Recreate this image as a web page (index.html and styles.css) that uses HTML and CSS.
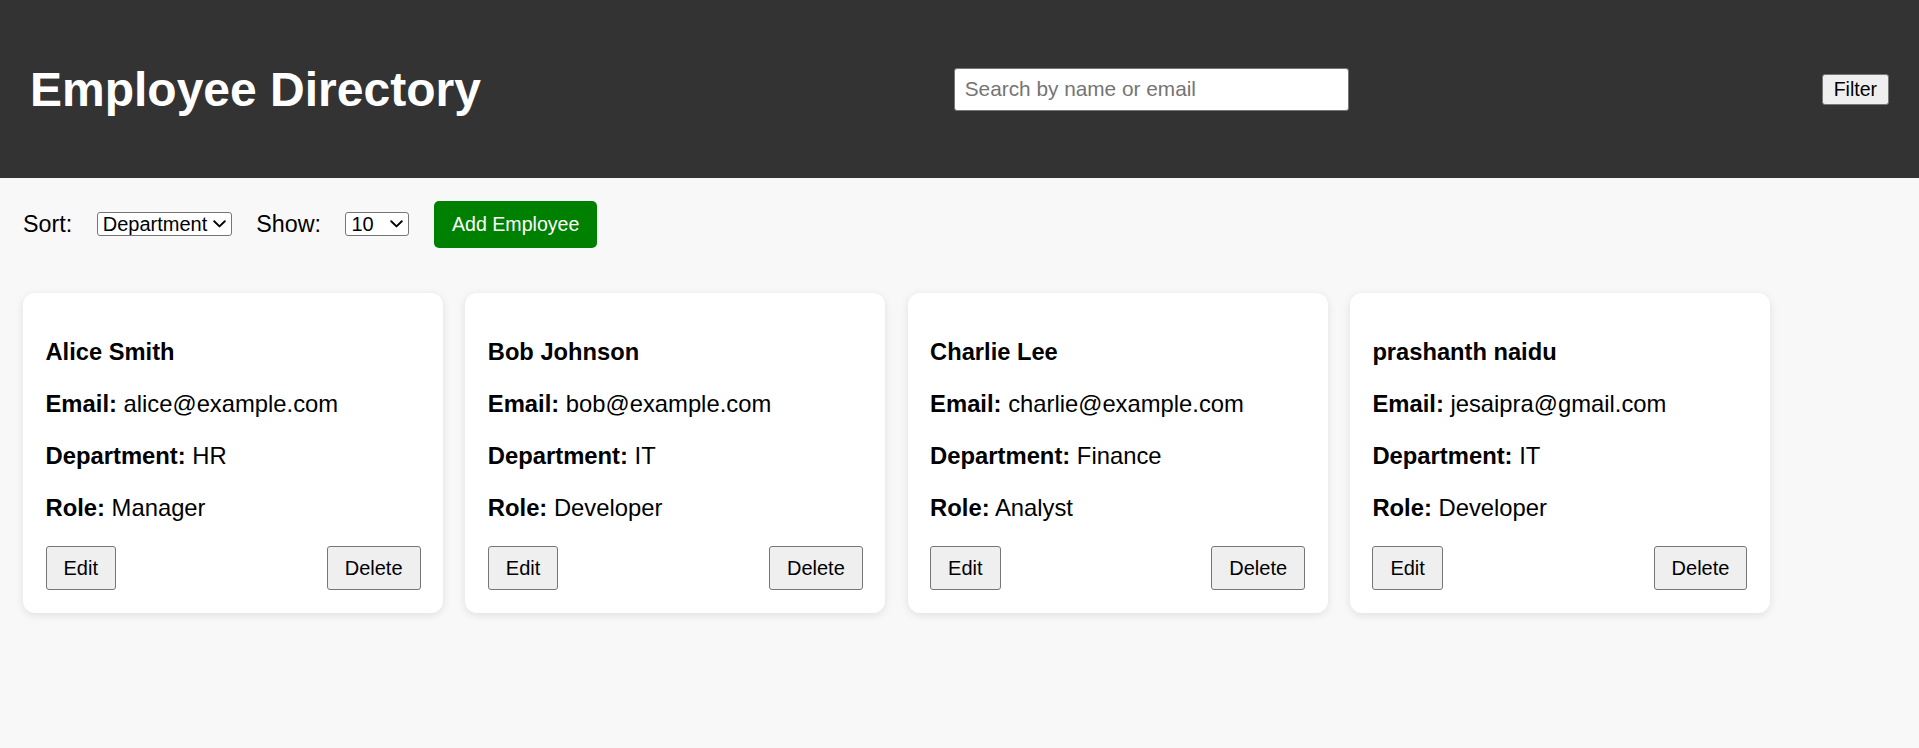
FILE: index.html
```html
<!DOCTYPE html>
<html lang="en">
<head>
<meta charset="utf-8">
<title>Employee Directory</title>
<link rel="stylesheet" href="styles.css">
</head>
<body>
<header class="topbar">
  <h1 class="title">Employee Directory</h1>
  <input class="search" type="text" placeholder="Search by name or email">
  <button class="filter-btn">Filter</button>
</header>
<main class="main">
  <div class="toolbar">
    <label class="tb-label">Sort:</label>
    <span class="select-wrap">
      <select class="tb-select sort-select">
        <option>Department</option>
        <option>Name</option>
        <option>Role</option>
      </select>
      <svg class="chev" width="13" height="8" viewBox="0 0 13 8"><path d="M1.2 1.2 L6.5 6.4 L11.8 1.2" fill="none" stroke="#000" stroke-width="1.9" stroke-linecap="round" stroke-linejoin="round"/></svg>
    </span>
    <label class="tb-label">Show:</label>
    <span class="select-wrap">
      <select class="tb-select show-select">
        <option>10</option>
        <option>25</option>
        <option>50</option>
        <option>100</option>
      </select>
      <svg class="chev" width="13" height="8" viewBox="0 0 13 8"><path d="M1.2 1.2 L6.5 6.4 L11.8 1.2" fill="none" stroke="#000" stroke-width="1.9" stroke-linecap="round" stroke-linejoin="round"/></svg>
    </span>
    <button class="add-btn">Add Employee</button>
  </div>
  <div class="cards">
    <div class="card">
      <h3 class="card-name">Alice Smith</h3>
      <p class="card-line"><strong>Email:</strong> alice@example.com</p>
      <p class="card-line"><strong>Department:</strong> HR</p>
      <p class="card-line"><strong>Role:</strong> Manager</p>
      <div class="card-actions"><button class="card-btn">Edit</button><button class="card-btn">Delete</button></div>
    </div>
    <div class="card">
      <h3 class="card-name">Bob Johnson</h3>
      <p class="card-line"><strong>Email:</strong> bob@example.com</p>
      <p class="card-line"><strong>Department:</strong> IT</p>
      <p class="card-line"><strong>Role:</strong> Developer</p>
      <div class="card-actions"><button class="card-btn">Edit</button><button class="card-btn">Delete</button></div>
    </div>
    <div class="card">
      <h3 class="card-name">Charlie Lee</h3>
      <p class="card-line"><strong>Email:</strong> charlie@example.com</p>
      <p class="card-line"><strong>Department:</strong> Finance</p>
      <p class="card-line"><strong>Role:</strong> Analyst</p>
      <div class="card-actions"><button class="card-btn">Edit</button><button class="card-btn">Delete</button></div>
    </div>
    <div class="card">
      <h3 class="card-name">prashanth naidu</h3>
      <p class="card-line"><strong>Email:</strong> jesaipra@gmail.com</p>
      <p class="card-line"><strong>Department:</strong> IT</p>
      <p class="card-line"><strong>Role:</strong> Developer</p>
      <div class="card-actions"><button class="card-btn">Edit</button><button class="card-btn">Delete</button></div>
    </div>
  </div>
</main>
</body>
</html>
```
FILE: styles.css
```css
* { box-sizing: border-box; }

body {
  margin: 0;
  background: #f8f8f8;
  font-family: "Liberation Sans", Arial, sans-serif;
  color: #000;
}

.topbar {
  height: 178px;
  background: #333333;
  color: #fff;
  padding: 0 30px;
  display: flex;
  align-items: center;
  justify-content: space-between;
}

.title {
  margin: 0;
  font-size: 48px;
  font-weight: bold;
  line-height: 55px;
}

.search {
  width: 395px;
  height: 43px;
  padding: 0 10px;
  font-family: "Liberation Sans", Arial, sans-serif;
  font-size: 20.8px;
  border: 1px solid #767676;
  border-radius: 3px;
  background: #fff;
  color: #000;
}
.search::placeholder { color: #757575; }

.filter-btn {
  height: 31px;
  padding: 0 11px;
  font-family: "Liberation Sans", Arial, sans-serif;
  font-size: 19.5px;
  background: #efefef;
  border: 1px solid #767676;
  border-radius: 3px;
  color: #000;
}

.main {
  padding: 22.5px 23px;
}

.toolbar {
  display: flex;
  align-items: center;
  gap: 24.5px;
  height: 47px;
  margin-bottom: 45px;
}

.tb-label {
  font-size: 23.3px;
}

.select-wrap {
  position: relative;
  display: inline-flex;
}

.tb-select {
  -webkit-appearance: none;
  appearance: none;
  height: 24.5px;
  font-family: "Liberation Sans", Arial, sans-serif;
  font-size: 20px;
  line-height: 22px;
  border: 1px solid #767676;
  border-radius: 3px;
  background: #fff;
  color: #000;
  padding: 0 22px 0 5px;
}
.sort-select { width: 135px; }
.show-select { width: 64px; }

.chev {
  position: absolute;
  right: 6px;
  top: 50%;
  margin-top: -4px;
  pointer-events: none;
}

.add-btn {
  height: 47px;
  padding: 0 18px;
  font-family: "Liberation Sans", Arial, sans-serif;
  font-size: 19.6px;
  color: #fff;
  background: #008000;
  border: none;
  border-radius: 5px;
}

.cards {
  display: flex;
  gap: 22.3px;
}

.card {
  width: 420px;
  background: #fff;
  border-radius: 12px;
  padding: 22.5px;
  box-shadow: 0 2px 8px rgba(0, 0, 0, 0.1);
}

.card-name {
  margin: 24px 0;
  font-size: 23.7px;
  font-weight: bold;
}

.card-line {
  margin: 24px 0;
  font-size: 23.8px;
}

.card-actions {
  display: flex;
  justify-content: space-between;
}

.card-btn {
  height: 44px;
  padding: 0 17px;
  font-family: "Liberation Sans", Arial, sans-serif;
  font-size: 20px;
  background: #efefef;
  border: 1px solid #767676;
  border-radius: 3px;
  color: #000;
}
```
